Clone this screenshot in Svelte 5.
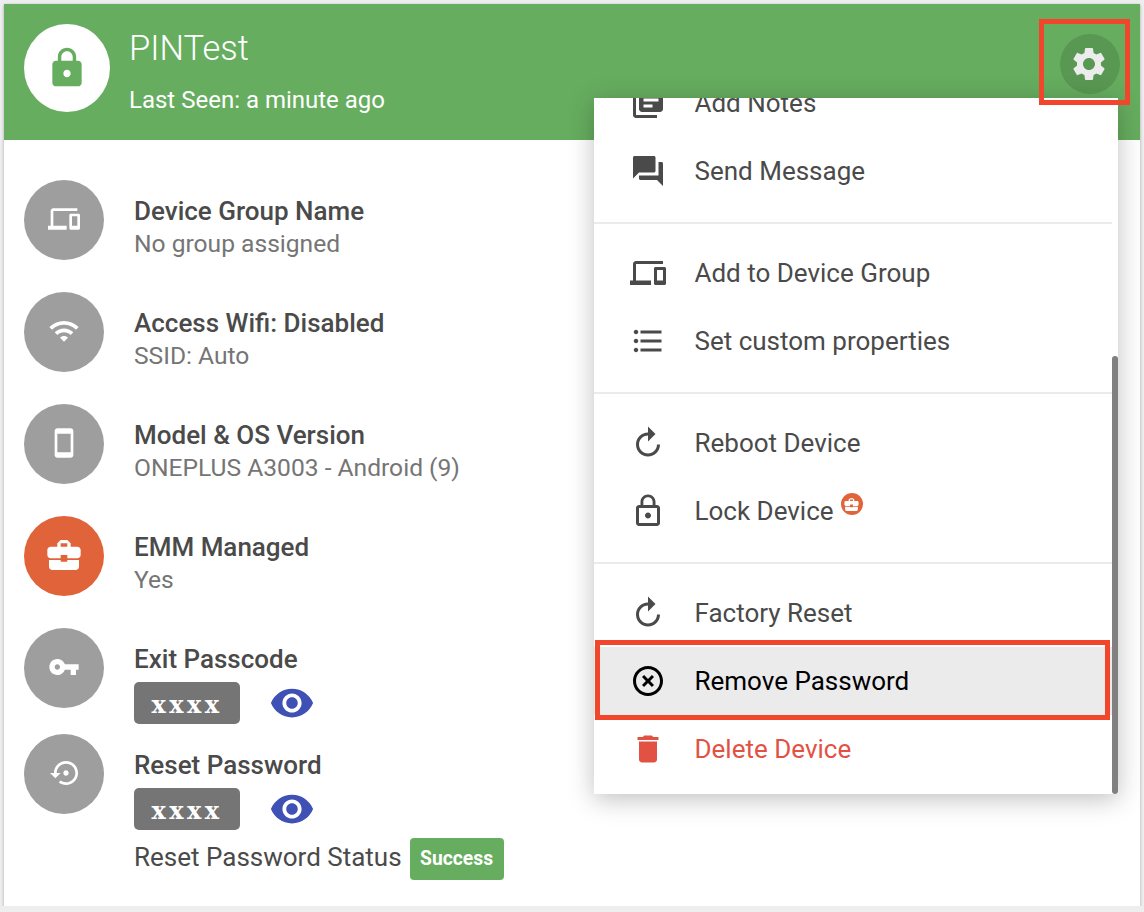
<script>
  const icons = {
    settings: 'M19.14 12.94c.04-.3.06-.61.06-.94 0-.32-.02-.64-.07-.94l2.03-1.58c.18-.14.23-.41.12-.61l-1.92-3.32c-.12-.22-.37-.29-.59-.22l-2.39.96c-.5-.38-1.03-.7-1.62-.94l-.36-2.54c-.04-.24-.24-.41-.48-.41h-3.84c-.24 0-.43.17-.47.41l-.36 2.54c-.59.24-1.13.57-1.62.94l-2.39-.96c-.22-.08-.47 0-.59.22L2.74 8.87c-.12.21-.08.47.12.61l2.03 1.58c-.05.3-.09.63-.09.94s.02.64.07.94l-2.03 1.58c-.18.14-.23.41-.12.61l1.92 3.32c.12.22.37.29.59.22l2.39-.96c.5.38 1.03.7 1.62.94l.36 2.54c.05.24.24.41.48.41h3.84c.24 0 .44-.17.47-.41l.36-2.54c.59-.24 1.13-.56 1.62-.94l2.39.96c.22.08.47 0 .59-.22l1.92-3.32c.12-.22.07-.47-.12-.61l-2.01-1.58zM12 15.6c-1.98 0-3.6-1.62-3.6-3.6s1.62-3.6 3.6-3.6 3.6 1.62 3.6 3.6-1.62 3.6-3.6 3.6z',
    lock: 'M18 8h-1V6c0-2.76-2.24-5-5-5S7 3.24 7 6v2H6c-1.1 0-2 .9-2 2v10c0 1.1.9 2 2 2h12c1.1 0 2-.9 2-2V10c0-1.1-.9-2-2-2zm-6 9c-1.1 0-2-.9-2-2s.9-2 2-2 2 .9 2 2-.9 2-2 2zm3.1-9H8.9V6c0-1.71 1.39-3.1 3.1-3.1 1.71 0 3.1 1.39 3.1 3.1v2z',
    lockOutline: 'M12 17c1.1 0 2-.9 2-2s-.9-2-2-2-2 .9-2 2 .9 2 2 2zm6-9h-1V6c0-2.76-2.24-5-5-5S7 3.24 7 6v2H6c-1.1 0-2 .9-2 2v10c0 1.1.9 2 2 2h12c1.1 0 2-.9 2-2V10c0-1.1-.9-2-2-2zM8.9 6c0-1.71 1.39-3.1 3.1-3.1s3.1 1.39 3.1 3.1v2H8.9V6zM18 20H6V10h12v10z',
    devices: 'M4 6h18V4H4c-1.1 0-2 .9-2 2v11H0v3h14v-3H4V6zm19 2h-6c-.55 0-1 .45-1 1v10c0 .55.45 1 1 1h6c.55 0 1-.45 1-1V9c0-.55-.45-1-1-1zm-1 9h-4v-7h4v7z',
    wifi: 'M1 9l2 2c4.97-4.97 13.03-4.97 18 0l2-2C16.93 2.93 7.08 2.93 1 9zm8 8l3 3 3-3c-1.65-1.66-4.34-1.66-6 0zm-4-4l2 2c2.76-2.76 7.24-2.76 10 0l2-2C15.14 9.14 8.87 9.14 5 13z',
    phone: 'M17 1.01L7 1c-1.1 0-2 .9-2 2v18c0 1.1.9 2 2 2h10c1.1 0 2-.9 2-2V3c0-1.1-.9-1.99-2-1.99zM17 19H7V5h10v14z',
    work: 'M10 16v-1H3.01L3 19c0 1.11.89 2 2 2h14c1.11 0 2-.89 2-2v-4h-7v1h-4zm10-9h-4.01V5l-2-2h-4l-2 2v2H4c-1.1 0-2 .9-2 2v3c0 1.11.89 2 2 2h6v-2h4v2h6c1.1 0 2-.9 2-2V9c0-1.1-.9-2-2-2zm-6 0h-4V5h4v2z',
    key: 'M12.65 10C11.83 7.67 9.61 6 7 6c-3.31 0-6 2.69-6 6s2.69 6 6 6c2.61 0 4.83-1.67 5.65-4H17v4h4v-4h2v-4H12.65zM7 14c-1.1 0-2-.9-2-2s.9-2 2-2 2 .9 2 2-.9 2-2 2z',
    restore: 'M14 12c0-1.1-.9-2-2-2s-2 .9-2 2 .9 2 2 2 2-.9 2-2zm-2-9c-4.97 0-9 4.03-9 9H0l4 4 4-4H5c0-3.87 3.13-7 7-7s7 3.13 7 7-3.13 7-7 7c-1.51 0-2.91-.49-4.06-1.3l-1.42 1.44C8.04 20.3 9.94 21 12 21c4.97 0 9-4.03 9-9s-4.03-9-9-9z',
    eye: 'M12 4.5C7 4.5 2.73 7.61 1 12c1.73 4.39 6 7.5 11 7.5s9.27-3.11 11-7.5c-1.73-4.39-6-7.5-11-7.5zM12 17c-2.76 0-5-2.24-5-5s2.24-5 5-5 5 2.24 5 5-2.24 5-5 5zm0-8c-1.66 0-3 1.34-3 3s1.34 3 3 3 3-1.34 3-3-1.34-3-3-3z',
    notes: 'M4 6H2v14c0 1.1.9 2 2 2h14v-2H4V6zm16-4H8c-1.1 0-2 .9-2 2v12c0 1.1.9 2 2 2h12c1.1 0 2-.9 2-2V4c0-1.1-.9-2-2-2zm-1 9H9V9h10v2zm-4 4H9v-2h6v2zm4-8H9V5h10v2z',
    message: 'M21 6h-2v9H6v2c0 .55.45 1 1 1h11l4 4V7c0-.55-.45-1-1-1zm-4 6V3c0-.55-.45-1-1-1H3c-.55 0-1 .45-1 1v14l4-4h10c.55 0 1-.45 1-1z',
    list: 'M4 10.5c-.83 0-1.5.67-1.5 1.5s.67 1.5 1.5 1.5 1.5-.67 1.5-1.5-.67-1.5-1.5-1.5zm0-6c-.83 0-1.5.67-1.5 1.5S3.17 7.5 4 7.5 5.5 6.83 5.5 6 4.83 4.5 4 4.5zm0 12c-.83 0-1.5.68-1.5 1.5s.68 1.5 1.5 1.5 1.5-.68 1.5-1.5-.67-1.5-1.5-1.5zM7 19h14v-2H7v2zm0-6h14v-2H7v2zm0-8v2h14V5H7z',
    replay: 'M12 5V1L7 6l5 5V7c3.31 0 6 2.69 6 6s-2.69 6-6 6-6-2.69-6-6H4c0 4.42 3.58 8 8 8s8-3.58 8-8-3.58-8-8-8z',
    remove: 'M14.59 8L12 10.59 9.41 8 8 9.41 10.59 12 8 14.59 9.41 16 12 13.41 14.59 16 16 14.59 13.41 12 16 9.41 14.59 8zM12 2C6.47 2 2 6.47 2 12s4.47 10 10 10 10-4.47 10-10S17.53 2 12 2zm0 18c-4.41 0-8-3.59-8-8s3.59-8 8-8 8 3.59 8 8-3.59 8-8 8z',
    trash: 'M6 19c0 1.1.9 2 2 2h8c1.1 0 2-.9 2-2V7H6v12zM19 4h-3.5l-1-1h-5l-1 1H5v2h14V4z'
  };

  const infoRows = [
    { icon: 'devices', title: 'Device Group Name', sub: 'No group assigned' },
    { icon: 'wifi', title: 'Access Wifi: Disabled', sub: 'SSID: Auto' },
    { icon: 'phone', title: 'Model & OS Version', sub: 'ONEPLUS A3003 - Android (9)' },
    { icon: 'work', title: 'EMM Managed', sub: 'Yes', orange: true }
  ];

  const menuGroups = [
    { items: [
      { icon: 'notes', label: 'Add Notes' },
      { icon: 'message', label: 'Send Message' }
    ] },
    { items: [
      { icon: 'devices', label: 'Add to Device Group' },
      { icon: 'list', label: 'Set custom properties' }
    ] },
    { items: [
      { icon: 'replay', label: 'Reboot Device', flip: true },
      { icon: 'lockOutline', label: 'Lock Device', emm: true }
    ] },
    { items: [
      { icon: 'replay', label: 'Factory Reset', flip: true },
      { icon: 'remove', label: 'Remove Password', active: true },
      { icon: 'trash', label: 'Delete Device', danger: true }
    ] }
  ];
</script>

{#snippet icon(name, cls = '')}
  <svg class={cls} viewBox="0 0 24 24" aria-hidden="true"><path d={icons[name]} /></svg>
{/snippet}

<div class="card">
  <header class="head">
    <div class="avatar">{@render icon('lock', 'avatar-icon')}</div>
    <div class="head-text">
      <h1>PINTest</h1>
      <p>Last Seen: a minute ago</p>
    </div>
    <button class="gear">{@render icon('settings', 'gear-icon')}</button>
  </header>

  <div class="info">
    {#each infoRows as row}
      <div class="row">
        <div class="circle" class:orange={row.orange}>{@render icon(row.icon, row.orange ? 'circle-icon big' : 'circle-icon')}</div>
        <div class="row-text">
          <div class="title">{row.title}</div>
          <div class="sub">{row.sub}</div>
        </div>
      </div>
    {/each}

    <div class="row secret">
      <div class="circle">{@render icon('key', 'circle-icon')}</div>
      <div class="row-text">
        <div class="title">Exit Passcode</div>
        <div class="pass">
          <span class="code">xxxx</span>
          {@render icon('eye', 'eye')}
        </div>
      </div>
    </div>

    <div class="row secret">
      <div class="circle">{@render icon('restore', 'circle-icon nudge')}</div>
      <div class="row-text">
        <div class="title">Reset Password</div>
        <div class="pass">
          <span class="code">xxxx</span>
          {@render icon('eye', 'eye')}
        </div>
        <div class="status">
          <span class="status-label">Reset Password Status</span>
          <span class="ok">Success</span>
        </div>
      </div>
    </div>
  </div>
</div>

<div class="menu">
  <div class="menu-scroll">
    {#each menuGroups as group, i}
      <div class="group" class:last={i === menuGroups.length - 1}>
        {#each group.items as item}
          <div class="item" class:active={item.active} class:danger={item.danger}>
            {@render icon(item.icon, item.flip ? 'item-icon flip' : 'item-icon')}
            <span>{item.label}</span>
            {#if item.emm}
              <span class="emm">{@render icon('work', 'emm-icon')}</span>
            {/if}
          </div>
        {/each}
      </div>
    {/each}
  </div>
  <div class="scrollbar"></div>
</div>

<div class="mark mark-gear"></div>
<div class="mark mark-item"></div>

<style>
  :global(body) {
    background: #eeeeee;
    font-family: Roboto, "Liberation Sans", sans-serif;
  }
  svg { display: block; fill: currentColor; }

  .card {
    margin: 4px 4px 0;
    height: 902px;
    background: #fff;
    box-shadow: 0 1px 3px rgba(0,0,0,0.3);
  }

  /* green header */
  .head {
    height: 136px;
    background: #66ad5f;
    color: #fff;
    display: flex;
    align-items: flex-start;
    padding: 20px 20px 0;
    box-sizing: border-box;
  }
  .avatar {
    width: 86px;
    height: 88px;
    border-radius: 50%;
    background: #fff;
    color: #66ad5f;
    display: flex;
    align-items: center;
    justify-content: center;
    flex-shrink: 0;
  }
  :global(.avatar-icon) { width: 44px; height: 44px; }
  .head-text { margin-left: 19px; flex: 1; }
  h1 {
    margin: 4px 0 0;
    font-size: 34.5px;
    line-height: 40px;
    font-weight: 300;
  }
  .head-text p {
    margin: 16px 0 0;
    font-size: 24px;
    line-height: 32px;
  }
  .gear {
    width: 60px;
    height: 60px;
    margin: 10px 0 0 0;
    padding: 0;
    border: none;
    border-radius: 50%;
    background: rgba(0,0,0,0.12);
    color: #ececec;
    display: flex;
    align-items: center;
    justify-content: center;
  }
  :global(.gear-icon) { width: 40px; height: 40px; margin-right: 2px; }

  /* left info list */
  .info { padding: 40px 20px 0; }
  .row { display: flex; height: 80px; margin-bottom: 32px; }
  .row.secret { margin-bottom: 0; height: 106px; }
  .circle {
    width: 80px;
    height: 80px;
    border-radius: 50%;
    background: #9e9e9e;
    color: #fff;
    display: flex;
    align-items: center;
    justify-content: center;
    flex-shrink: 0;
  }
  .circle.orange { background: #e0633a; }
  :global(.circle-icon) { width: 32px; height: 32px; margin-bottom: 3px; }
  :global(.circle-icon.big) { width: 40px; height: 40px; }
  :global(.circle-icon.nudge) { margin-left: 4px; }
  .row-text { margin-left: 30px; padding-top: 15px; }
  .title {
    font-size: 26px;
    line-height: 33px;
    font-weight: 500;
    color: #4a4a4a;
  }
  .sub {
    font-size: 24.6px;
    line-height: 32px;
    color: #757575;
  }
  .pass {
    display: flex;
    align-items: center;
    margin-top: 4px;
  }
  .code {
    width: 106px;
    height: 42px;
    border-radius: 5px;
    background: #757575;
    color: #fff;
    font-family: "DejaVu Serif", serif;
    font-weight: 700;
    font-size: 24px;
    line-height: 46px;
    letter-spacing: 3.4px;
    text-align: center;
  }
  :global(.eye) { width: 46px; height: 46px; margin-left: 29px; color: #3f51b5; }
  .status {
    display: flex;
    align-items: center;
    margin-top: 6px;
    font-size: 26px;
    color: #4a4a4a;
  }
  .status-label { margin-bottom: 4px; }
  .ok {
    margin-left: 8px;
    width: 94px;
    height: 42px;
    border-radius: 4px;
    background: #66ad5f;
    color: #fff;
    font-size: 19.3px;
    font-weight: 700;
    line-height: 42px;
    text-align: center;
  }

  /* popup menu, scrolled down a little */
  .menu {
    position: absolute;
    left: 594px;
    top: 98px;
    width: 524px;
    height: 696px;
    background: #fff;
    overflow: hidden;
    box-shadow: 0 5px 24px rgba(0,0,0,0.25);
  }
  .menu-scroll { margin-top: -29px; width: 518px; }
  .group {
    padding-bottom: 17px;
    margin-bottom: 15px;
    border-bottom: 2px solid #ebebeb;
  }
  .group.last { border-bottom: none; }
  .item {
    height: 68px;
    display: flex;
    align-items: center;
    padding-left: 36px;
    font-size: 26px;
    color: #4a4a4a;
  }
  .item.active { background: #ebebeb; color: #000; }
  .item.danger { color: #e25243; }
  :global(.item-icon) { width: 36px; height: 36px; margin-right: 28.5px; flex-shrink: 0; }
  :global(.item-icon.flip) { transform: scaleX(-1); }
  .emm {
    width: 22px;
    height: 22px;
    border-radius: 50%;
    background: #e0633a;
    color: #fff;
    display: flex;
    align-items: center;
    justify-content: center;
    margin: -14px 0 0 7px;
  }
  :global(.emm-icon) { width: 17px; height: 17px; }
  .scrollbar {
    position: absolute;
    right: 0;
    top: 258px;
    bottom: 0;
    width: 6px;
    border-radius: 3px;
    background: #808080;
  }

  /* red annotation boxes */
  .mark {
    position: absolute;
    box-sizing: border-box;
    border: 5px solid #f1462b;
  }
  .mark-gear { left: 1039px; top: 19px; width: 91px; height: 86px; }
  .mark-item { left: 595px; top: 640px; width: 515px; height: 80px; }
</style>
